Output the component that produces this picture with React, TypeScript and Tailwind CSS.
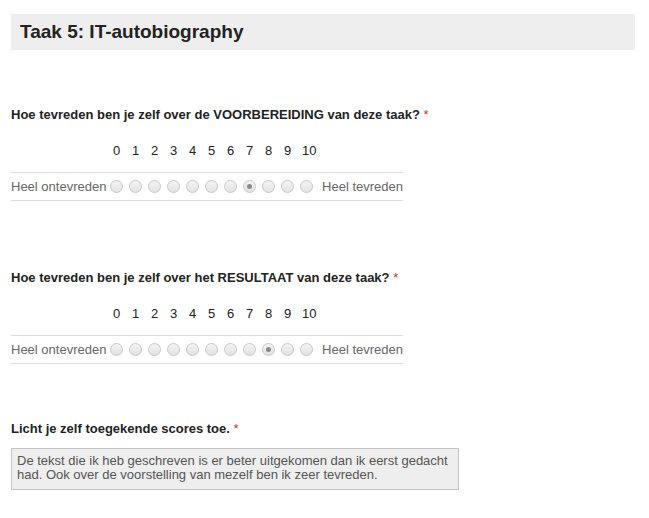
const scores = [0, 1, 2, 3, 4, 5, 6, 7, 8, 9, 10];

function Radio({ checked }: { checked: boolean }) {
  return (
    <span className="flex h-[13px] w-[13px] items-center justify-center rounded-full border border-[#c8c8c8] bg-gradient-to-b from-[#f4f4f4] to-[#e2e2e2]">
      {checked && <span className="h-[5px] w-[5px] rounded-full bg-[#8a8a8a]" />}
    </span>
  );
}

function Scale({ question, value }: { question: React.ReactNode; value: number }) {
  return (
    <div className="px-[11px]">
      <p className="text-[13px] font-bold leading-[16px] text-[#222]">
        {question} <span className="font-normal text-[#c43b1d]">*</span>
      </p>
      <div className="mt-[20px] inline-block">
        <div className="flex text-[13px] leading-[16px] text-[#222]">
          <div className="w-[96px]" />
          {scores.map((s) => (
            <div key={s} className={s === 10 ? "w-[19px] pl-[5px] whitespace-nowrap" : "w-[19px] text-center"}>
              {s}
            </div>
          ))}
        </div>
        <div className="mt-[13px] flex h-[29px] w-[392px] items-center border-y border-[#dcdcdc] text-[13px] text-[#666]">
          <div className="w-[96px]">Heel ontevreden</div>
          {scores.map((s) => (
            <div key={s} className="flex w-[19px] justify-center">
              <Radio checked={s === value} />
            </div>
          ))}
          <div className="ml-auto">Heel tevreden</div>
        </div>
      </div>
    </div>
  );
}

export default function App() {
  return (
    <div className="h-[518px] w-[649px] bg-white pt-[14px] font-['Liberation_Sans',Arial,sans-serif]">
      <div className="mx-[11px] flex h-[36px] w-[624px] items-center bg-[#eeeeee] px-[9px]">
        <h1 className="text-[19px] font-bold text-[#222]">Taak 5: IT-autobiography</h1>
      </div>

      <div className="mt-[57px]">
        <Scale question="Hoe tevreden ben je zelf over de VOORBEREIDING van deze taak?" value={7} />
      </div>

      <div className="mt-[69px]">
        <Scale question="Hoe tevreden ben je zelf over het RESULTAAT van deze taak?" value={8} />
      </div>

      <div className="mt-[57px] px-[11px]">
        <p className="text-[13px] font-bold leading-[16px] text-[#222]">
          Licht je zelf toegekende scores toe. <span className="font-normal text-[#c43b1d]">*</span>
        </p>
        <div className="mt-[11px] h-[42px] w-[448px] border border-[#c4c4c4] bg-[#eeeeee] px-[5px] pt-[5px] text-[13px] leading-[14px] text-[#555]">
          De tekst die ik heb geschreven is er beter uitgekomen dan ik eerst gedacht had. Ook over de voorstelling van mezelf ben ik zeer tevreden.
        </div>
      </div>
    </div>
  );
}
